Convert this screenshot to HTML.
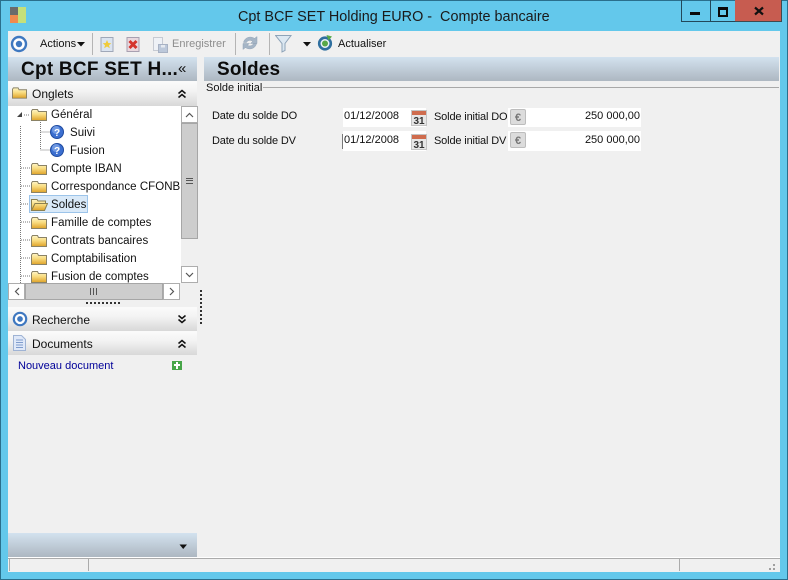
<!DOCTYPE html>
<html>
<head>
<meta charset="utf-8">
<style>
html,body{margin:0;padding:0;width:788px;height:580px;overflow:hidden;background:#63c8eb}
body{position:relative;font-family:"Liberation Sans",sans-serif;font-size:11.5px;color:#111}
.a,.t,svg{position:absolute}
.t{white-space:pre;line-height:14px}
.l{font-size:11px;letter-spacing:-.15px}
.grad{background:linear-gradient(#d3e2ef,#adb7c1)}
.bar{background:linear-gradient(#fbfbfb,#f3f3f3 40%,#d8d8d8)}
.sb{background:#f0f0f0;border:1px solid #adadad;box-sizing:border-box}
.thumb{background:#cdcdcd;box-sizing:border-box;border:1px solid #a6a6a6}
.f{width:16px;height:12px}
.tree .t{letter-spacing:.04px}
</style>
</head>
<body>
<svg width="0" height="0" style="position:absolute">
<defs>
<linearGradient id="fg" x1="0" y1="0" x2="0" y2="1"><stop offset="0" stop-color="#fff6c8"/><stop offset=".45" stop-color="#f8dc80"/><stop offset="1" stop-color="#dfa228"/></linearGradient>
<symbol id="folder" viewBox="0 0 16 12"><path d="M.5 2V11.500H15.500V2.500H7.500L6.500 .5H1.500Z" fill="url(#fg)" stroke="#8a8266"/></symbol>
<symbol id="open" viewBox="0 0 18 13"><path d="M1.500 12.500V1.500H7L8 3H15.500V5.500M1.500 12.500L5 5.500H17.500L14.500 12.500Z" fill="url(#fg)" stroke="#8b8050"/></symbol>
<symbol id="q" viewBox="0 0 14 14"><circle cx="7" cy="7" r="6.500" fill="#3c6fd0" stroke="#1f4ba0"/><circle cx="6" cy="5" r="4" fill="#8fb4ee" opacity=".6"/><text x="7" y="11" font-size="10" font-weight="bold" font-family="Liberation Sans" fill="#fff" text-anchor="middle">?</text></symbol>
<symbol id="ring" viewBox="0 0 18 18"><circle cx="9" cy="9" r="7" fill="#fff" stroke="#3f78c0" stroke-width="2.400"/><circle cx="9" cy="9" r="3.200" fill="#3f78c0"/></symbol>
<symbol id="cal" viewBox="0 0 16 16"><rect x=".5" y=".5" width="15" height="15" fill="#e6e6e6" stroke="#c4c4c4"/><rect x="1" y="1" width="14" height="4" fill="#cf6c4e"/><text x="8" y="14" font-size="10" font-weight="bold" font-family="Liberation Sans" fill="#333" text-anchor="middle">31</text></symbol>
<symbol id="eur" viewBox="0 0 16 16"><rect x=".5" y=".5" width="15" height="15" rx="1.500" fill="#dcdcdc" stroke="#bdbdbd"/><text x="8" y="12" font-size="11" font-weight="bold" font-family="Liberation Sans" fill="#777" text-anchor="middle">€</text></symbol>
<symbol id="up" viewBox="0 0 10 10"><path d="M1.500 4.500L5 1.500L8.500 4.500M1.500 8.500L5 5.500L8.500 8.500" fill="none" stroke="#111" stroke-width="1.500"/></symbol>
<symbol id="down" viewBox="0 0 10 10"><path d="M1.500 1.500L5 4.500L8.500 1.500M1.500 5.500L5 8.500L8.500 5.500" fill="none" stroke="#111" stroke-width="1.500"/></symbol>
</defs>
</svg>

<!-- window frame -->
<div class="a" style="left:0;top:0;width:786px;height:578px;border:1px solid #2a6f8c"></div>
<div class="a" style="left:8px;top:31px;width:772px;height:541px;background:#f0f0f0"></div>

<!-- app icon -->
<div class="a" style="left:10px;top:7px;width:8px;height:8px;background:#6b6b6b"></div>
<div class="a" style="left:10px;top:15px;width:8px;height:8px;background:#f08a4e"></div>
<div class="a" style="left:18px;top:7px;width:8px;height:16px;background:#c5e07a"></div>

<div class="t" style="left:238px;top:8px;font-size:14.4px;line-height:18px;color:#1a1a1a">Cpt BCF SET Holding EURO -  Compte bancaire</div>

<!-- window buttons -->
<div class="a" style="left:681px;top:0;width:28px;height:21px;border:1px solid #22485a;border-top:0;box-sizing:content-box"></div>
<div class="a" style="left:709px;top:0;width:26px;height:21px;border:1px solid #22485a;border-top:0;border-left:0"></div>
<div class="a" style="left:735px;top:0;width:46px;height:21px;background:#c75c50;border:1px solid #3f4a4f;border-top:0;border-left:0"></div>
<div class="a" style="left:690px;top:12px;width:10px;height:3px;background:#0a0a0a"></div>
<div class="a" style="left:718px;top:7px;width:6px;height:5px;border:2px solid #0a0a0a;border-top-width:3px"></div>
<svg style="left:754px;top:6px" width="10" height="10"><path d="M1 1.500L9 8.500M9 1.500L1 8.500" stroke="#111" stroke-width="2.200"/></svg>

<!-- toolbar -->
<svg style="left:10px;top:35px" width="18" height="18"><use href="#ring"/></svg>
<div class="t" style="left:40px;top:37px;font-size:11px">Actions</div>
<svg style="left:77px;top:42px" width="8" height="5"><path d="M0 0H8L4 4.500Z" fill="#111"/></svg>
<div class="a" style="left:92px;top:33px;width:1px;height:22px;background:#b4b4b4"></div>
<svg style="left:100px;top:37px" width="14" height="15"><rect x="1" y=".5" width="12" height="14" fill="#dbe4f0" stroke="#a0a8b8"/><path d="M7 3l1.300 3 3 .2-2.300 2 .8 3-2.800-1.700-2.800 1.700.8-3-2.300-2 3-.2z" fill="#f0cb3a"/></svg>
<svg style="left:126px;top:37px" width="14" height="15"><rect x="1" y=".5" width="12" height="14" fill="#e9d8de" stroke="#a8a0b0"/><path d="M3.500 4L10.500 11M10.500 4L3.500 11" stroke="#d4332d" stroke-width="3"/></svg>
<svg style="left:152px;top:37px" width="17" height="16"><rect x="1.500" y=".5" width="9" height="13" fill="#eef1f6" stroke="#c6cad2"/><rect x="6.500" y="7.500" width="9" height="8" fill="#bcc8da" stroke="#a8b2c4"/><rect x="9" y="8" width="4" height="2.500" fill="#e6eaf0"/></svg>
<div class="t" style="left:172px;top:37px;font-size:11px;color:#8d8d8d">Enregistrer</div>
<div class="a" style="left:235px;top:33px;width:1px;height:22px;background:#b4b4b4"></div>
<svg style="left:242px;top:35px" width="16" height="16"><path d="M1.500 7.500C2.500 2.500 8.500 .5 12.500 3.500L15 1.500V8.500H8.500L10.800 6.300C8 4.500 5.500 5.500 4.500 7.500ZM14.500 8.500C13.500 13.500 7.500 15.500 3.500 12.500L1 14.500V8.500H7.500L5.200 10.200C8 11.700 10.500 10.700 11.500 8.500Z" fill="#a5b5c6" stroke="#93a4b6" stroke-width=".5"/></svg>
<div class="a" style="left:269px;top:33px;width:1px;height:22px;background:#b4b4b4"></div>
<svg style="left:275px;top:35px" width="17" height="18"><path d="M.5 .5H16L10 8.500V15.500L7 17V8.500Z" fill="#dce8f2" stroke="#8ea3b8"/></svg>
<svg style="left:303px;top:42px" width="8" height="5"><path d="M0 0H8L4 4.500Z" fill="#111"/></svg>
<svg style="left:317px;top:35px" width="16" height="16"><circle cx="8" cy="8.500" r="5.800" fill="#eaf2f8" stroke="#2f6f9f" stroke-width="2.600"/><circle cx="8" cy="8.500" r="3" fill="#58a848"/><path d="M9.500 0L15 1.500L11.500 5.500Z" fill="#58a848"/></svg>
<div class="t" style="left:338px;top:37px;font-size:11px">Actualiser</div>

<!-- headers -->
<div class="a grad" style="left:8px;top:57px;width:189px;height:24px"></div>
<div class="t" style="left:21px;top:59px;font-size:19px;line-height:21px;font-weight:bold;color:#0c0c0c;letter-spacing:.25px">Cpt BCF SET H...</div>
<div class="t" style="left:178px;top:60px;font-size:15px;line-height:17px">«</div>
<div class="a grad" style="left:204px;top:57px;width:575px;height:24px"></div>
<div class="t" style="left:217px;top:59px;font-size:19px;line-height:21px;font-weight:bold;color:#0c0c0c;letter-spacing:.15px">Soldes</div>

<!-- group -->
<div class="t" style="left:206px;top:81px;font-size:11px">Solde initial</div>
<div class="a" style="left:263px;top:87px;width:516px;height:1px;background:#a8a8a8"></div>

<!-- form -->
<div class="t l" style="left:212px;top:109px">Date du solde DO</div>
<div class="t l" style="left:212px;top:134px">Date du solde DV</div>
<div class="a" style="left:343px;top:108px;width:83px;height:19px;background:#fff"></div>
<div class="a" style="left:343px;top:131px;width:83px;height:20px;background:#fff"></div>
<div class="a" style="left:342px;top:134px;width:1px;height:15px;background:#777"></div>
<div class="t" style="left:344px;top:109px;font-size:11px">01/12/2008</div>
<div class="t" style="left:344px;top:133px;font-size:11px">01/12/2008</div>
<svg style="left:411px;top:110px" width="16" height="16"><use href="#cal"/></svg>
<svg style="left:411px;top:134px" width="16" height="16"><use href="#cal"/></svg>
<div class="t l" style="left:434px;top:110px">Solde initial DO</div>
<div class="t l" style="left:434px;top:134px">Solde initial DV</div>
<div class="a" style="left:508px;top:108px;width:133px;height:19px;background:#fff"></div>
<div class="a" style="left:508px;top:131px;width:133px;height:20px;background:#fff"></div>
<svg style="left:510px;top:109px" width="16" height="16"><use href="#eur"/></svg>
<svg style="left:510px;top:132px" width="16" height="16"><use href="#eur"/></svg>
<div class="t" style="left:560px;width:80px;top:109px;text-align:right;font-size:11px">250 000,00</div>
<div class="t" style="left:560px;width:80px;top:133px;text-align:right;font-size:11px">250 000,00</div>

<!-- Onglets -->
<div class="a bar" style="left:8px;top:81px;width:189px;height:25px"></div>
<svg style="left:12px;top:87px" width="15" height="12"><use href="#folder" width="15" height="12"/></svg>
<div class="t" style="left:32px;top:87px;font-size:12px">Onglets</div>
<svg style="left:177px;top:89px" width="10" height="10"><use href="#up"/></svg>

<!-- tree -->
<div class="a tree" style="left:8px;top:106px;width:173px;height:177px;background:#fff;overflow:hidden">
  <svg style="left:0;top:0" width="60" height="177">
    <path d="M12.500 20V177" stroke="#777" stroke-dasharray="1 1" fill="none"/>
    <path d="M32.500 16V44M32.500 26H42M32.500 44H42M13 62H23M13 80H23M13 98H22M13 116H23M13 134H23M13 152H23M13 170H23" stroke="#777" stroke-dasharray="1 1" fill="none"/>
    <path d="M16 9H22" stroke="#777" stroke-dasharray="1 1" fill="none"/>
    <path d="M9 11L14 6V11Z" fill="#444"/>
  </svg>
  <div class="a" style="left:21px;top:89px;width:59px;height:18px;box-sizing:border-box;background:#d9e9f8;border:1px solid #9cc4ea"></div>
  <svg class="f" style="left:23px;top:3px"><use href="#folder"/></svg>
  <svg style="left:42px;top:19px" width="14" height="14"><use href="#q"/></svg>
  <svg style="left:42px;top:37px" width="14" height="14"><use href="#q"/></svg>
  <svg class="f" style="left:23px;top:57px"><use href="#folder"/></svg>
  <svg class="f" style="left:23px;top:75px"><use href="#folder"/></svg>
  <svg style="left:22px;top:92px" width="18" height="13"><use href="#open"/></svg>
  <svg class="f" style="left:23px;top:111px"><use href="#folder"/></svg>
  <svg class="f" style="left:23px;top:129px"><use href="#folder"/></svg>
  <svg class="f" style="left:23px;top:147px"><use href="#folder"/></svg>
  <svg class="f" style="left:23px;top:165px"><use href="#folder"/></svg>
  <div class="t" style="left:43px;top:2px">Général</div>
  <div class="t" style="left:62px;top:20px">Suivi</div>
  <div class="t" style="left:62px;top:38px">Fusion</div>
  <div class="t" style="left:43px;top:56px">Compte IBAN</div>
  <div class="t" style="left:43px;top:74px">Correspondance CFONB</div>
  <div class="t" style="left:43px;top:92px">Soldes</div>
  <div class="t" style="left:43px;top:110px">Famille de comptes</div>
  <div class="t" style="left:43px;top:128px">Contrats bancaires</div>
  <div class="t" style="left:43px;top:146px">Comptabilisation</div>
  <div class="t" style="left:43px;top:164px">Fusion de comptes</div>
</div>

<!-- vertical scrollbar -->
<div class="a" style="left:181px;top:106px;width:17px;height:177px;background:#f0f0f0"></div>
<div class="a sb" style="left:181px;top:106px;width:17px;height:17px;background:#fff"></div>
<svg style="left:185px;top:112px" width="9" height="6"><path d="M1 5L4.500 1.500L8 5" fill="none" stroke="#555" stroke-width="1.200"/></svg>
<div class="a thumb" style="left:181px;top:123px;width:17px;height:116px"></div>
<div class="a" style="left:186px;top:178px;width:7px;height:6px;border-top:1px solid #555;border-bottom:1px solid #555;box-sizing:border-box"></div>
<div class="a" style="left:186px;top:180px;width:7px;height:1px;background:#555"></div>
<div class="a sb" style="left:181px;top:266px;width:17px;height:17px;background:#fff"></div>
<svg style="left:185px;top:272px" width="9" height="6"><path d="M1 1L4.500 4.500L8 1" fill="none" stroke="#555" stroke-width="1.200"/></svg>

<!-- horizontal scrollbar -->
<div class="a sb" style="left:8px;top:283px;width:17px;height:17px;background:#fff"></div>
<svg style="left:14px;top:287px" width="6" height="9"><path d="M5 1L1.500 4.500L5 8" fill="none" stroke="#555" stroke-width="1.200"/></svg>
<div class="a thumb" style="left:25px;top:283px;width:138px;height:17px"></div>
<div class="a" style="left:90px;top:288px;width:7px;height:7px;background:repeating-linear-gradient(90deg,#555 0 1px,transparent 1px 3px)"></div>
<div class="a sb" style="left:163px;top:283px;width:17px;height:17px;background:#fff"></div>
<svg style="left:169px;top:287px" width="6" height="9"><path d="M1 1L4.500 4.500L1 8" fill="none" stroke="#555" stroke-width="1.200"/></svg>

<!-- splitters -->
<div class="a" style="left:86px;top:302px;width:34px;height:2px;background:repeating-linear-gradient(90deg,#333 0 2px,transparent 2px 4px)"></div>
<div class="a" style="left:200px;top:290px;width:2px;height:34px;background:repeating-linear-gradient(180deg,#333 0 2px,transparent 2px 4px)"></div>

<!-- Recherche -->
<div class="a bar" style="left:8px;top:307px;width:189px;height:24px"></div>
<svg style="left:12px;top:311px" width="16" height="16"><use href="#ring" width="16" height="16"/></svg>
<div class="t" style="left:32px;top:313px;font-size:12px">Recherche</div>
<svg style="left:177px;top:314px" width="10" height="10"><use href="#down"/></svg>

<!-- Documents -->
<div class="a bar" style="left:8px;top:331px;width:189px;height:24px"></div>
<svg style="left:13px;top:335px" width="13" height="16"><path d="M.5 .5H8.500L12.500 4.500V15.500H.5Z" fill="#dfe8f8" stroke="#9fb3d4"/><path d="M3 5H10M3 7.500H10M3 10H10M3 12.500H10" stroke="#7f9ccd"/></svg>
<div class="t" style="left:32px;top:337px;font-size:12px">Documents</div>
<svg style="left:177px;top:339px" width="10" height="10"><use href="#up"/></svg>

<div class="t" style="left:18px;top:359px;font-size:11px;color:#000099">Nouveau document</div>
<div class="a" style="left:172px;top:361px;width:10px;height:9px;background:#47a548"></div>
<div class="a" style="left:176px;top:362px;width:2px;height:7px;background:#fff"></div>
<div class="a" style="left:174px;top:364px;width:6px;height:2px;background:#fff"></div>

<!-- bottom panel -->
<div class="a grad" style="left:8px;top:533px;width:189px;height:24px"></div>
<svg style="left:179px;top:544px" width="9" height="6"><path d="M.5 .5H8L4.200 5Z" fill="#111"/></svg>

<!-- status bar -->
<div class="a" style="left:8px;top:557px;width:772px;height:15px;background:#f0f0f0;border-top:1px solid #fff;box-sizing:border-box"></div>
<div class="a" style="left:8px;top:558px;width:772px;height:1px;background:#ababab"></div>
<div class="a" style="left:9px;top:558px;width:1px;height:13px;background:#ababab"></div>
<div class="a" style="left:88px;top:558px;width:1px;height:13px;background:#ababab"></div>
<div class="a" style="left:679px;top:558px;width:1px;height:13px;background:#ababab"></div>
<div class="a" style="left:773px;top:564px;width:2px;height:2px;background:#a0a0a0"></div>
<div class="a" style="left:773px;top:568px;width:2px;height:2px;background:#a0a0a0"></div>
<div class="a" style="left:769px;top:568px;width:2px;height:2px;background:#a0a0a0"></div>
</body>
</html>
